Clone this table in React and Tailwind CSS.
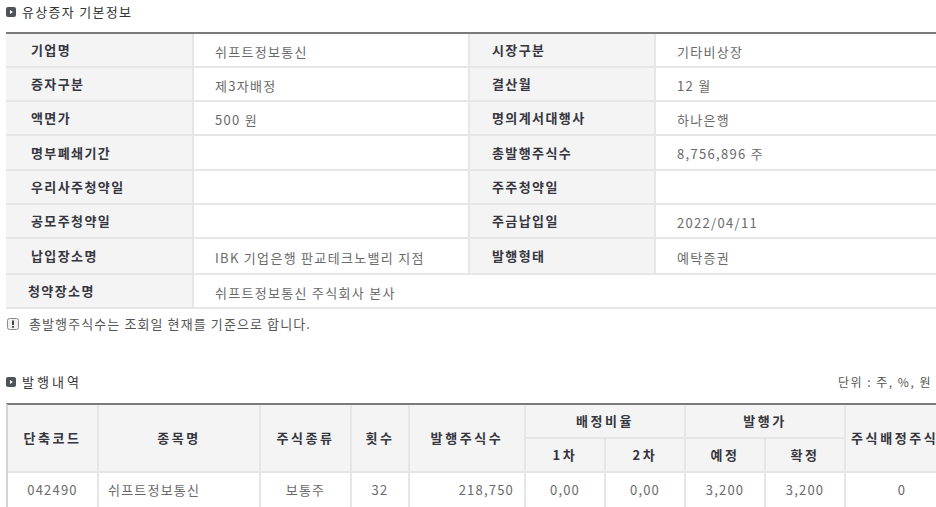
import React from 'react';

const SectionIcon = () => (
  <svg width="10" height="10" viewBox="0 0 10 10" className="shrink-0">
    <rect x="0" y="0" width="10" height="10" rx="2" fill="#4d5359" />
    <polygon points="4,3 7,5 4,7" fill="#ffffff" />
  </svg>
);

const NoteIcon = () => (
  <svg width="12" height="12" viewBox="0 0 12 12" className="shrink-0">
    <rect x="0.5" y="0.5" width="11" height="11" rx="2" fill="#f0f0f0" stroke="#8b8b8b" />
    <rect x="5" y="2.5" width="2" height="4.5" fill="#454545" />
    <rect x="5" y="8" width="2" height="1.7" fill="#454545" />
  </svg>
);

const info = [
  ['기업명', '쉬프트정보통신', '시장구분', '기타비상장'],
  ['증자구분', '제3자배정', '결산월', '12 월'],
  ['액면가', '500 원', '명의계서대행사', '하나은행'],
  ['명부폐쇄기간', '', '총발행주식수', '8,756,896 주'],
  ['우리사주청약일', '', '주주청약일', ''],
  ['공모주청약일', '', '주금납입일', '2022/04/11'],
  ['납입장소명', 'IBK 기업은행 판교테크노밸리 지점', '발행형태', '예탁증권'],
];

const Label = ({ children, className = '' }) => (
  <div className={`bg-[#f4f4f4] flex items-center font-bold text-[13px] tracking-[1.4px] text-[#343640] ${className}`}>
    {children}
  </div>
);

const Value = ({ children, className = '' }) => (
  <div className={`bg-white flex items-center pt-[3px] text-[13px] tracking-[1.3px] text-[#6a6a6a] ${className}`}>
    {children}
  </div>
);

const Head = ({ children, className = '' }) => (
  <div className={`bg-[#f4f4f4] flex items-center justify-center font-bold text-[13px] tracking-[2.6px] text-[#343640] whitespace-nowrap overflow-hidden ${className}`}>
    {children}
  </div>
);

const Cell = ({ children, className = '' }) => (
  <div className={`bg-white flex items-center justify-center text-[13px] tracking-[1.2px] text-[#6a6a6a] ${className}`}>
    {children}
  </div>
);

export default function App() {
  return (
    <div className="w-[936px] h-[507px] overflow-hidden bg-white font-['Noto_Sans_CJK_KR',sans-serif]">
      {/* 유상증자 기본정보 */}
      <div className="pl-[6px]">
        <div className="h-[24px] flex items-center gap-[6px] text-[13px] text-[#333]">
          <SectionIcon />
          <span className="tracking-[1.3px]">유상증자 기본정보</span>
        </div>

        <div className="mt-[8px] w-[930px] border-t-2 border-b-2 border-t-[#7b7b7b] border-b-[#e6e6e6] bg-[#e6e6e6] grid grid-cols-[186px_274px_184px_1fr] grid-rows-[32px_32px_32px_33px_32px_32px_34px_32px] gap-[2px]">
          {info.map((r) => (
            <React.Fragment key={r[0]}>
              <Label className="pl-[25px]">{r[0]}</Label>
              <Value className="pl-[21px]">{r[1]}</Value>
              <Label className="pl-[22px]">{r[2]}</Label>
              <Value className="pl-[21px]">{r[3]}</Value>
            </React.Fragment>
          ))}
          <Label className="pl-[22px]">청약장소명</Label>
          <Value className="pl-[21px] col-span-3">쉬프트정보통신 주식회사 본사</Value>
        </div>

        <div className="mt-[5px] h-[20px] flex items-center gap-[10px] pl-[1px] text-[13px] tracking-[1.1px] text-[#555]">
          <NoteIcon />
          <span>총발행주식수는 조회일 현재를 기준으로 합니다.</span>
        </div>

        {/* 발행내역 */}
        <div className="mt-[36px] h-[24px] w-[926px] flex items-center justify-between">
          <div className="flex items-center gap-[6px] text-[13px] text-[#333]">
            <SectionIcon />
            <span className="tracking-[3px]">발행내역</span>
          </div>
          <span className="text-[12px] tracking-[1.5px] text-[#555]">단위 : 주, %, 원</span>
        </div>

        <div className="mt-[9px] w-[952px] border-t-2 border-l-2 border-t-[#7b7b7b] border-l-[#d4d4d4] bg-[#e6e6e6] grid grid-cols-[89px_160px_89px_56px_114px_78px_78px_78px_78px_112px] grid-rows-[32px_32px_34px] gap-[2px]">
          <Head className="row-span-2">단축코드</Head>
          <Head className="row-span-2">종목명</Head>
          <Head className="row-span-2">주식종류</Head>
          <Head className="row-span-2">횟수</Head>
          <Head className="row-span-2">발행주식수</Head>
          <Head className="col-span-2">배정비율</Head>
          <Head className="col-span-2">발행가</Head>
          <Head className="row-span-2">주식배정주식수</Head>
          <Head>1차</Head>
          <Head>2차</Head>
          <Head>예정</Head>
          <Head>확정</Head>

          <Cell>042490</Cell>
          <Cell className="justify-start pl-[9px]">쉬프트정보통신</Cell>
          <Cell>보통주</Cell>
          <Cell>32</Cell>
          <Cell className="justify-end pr-[10px]">218,750</Cell>
          <Cell>0,00</Cell>
          <Cell>0,00</Cell>
          <Cell>3,200</Cell>
          <Cell>3,200</Cell>
          <Cell>0</Cell>
        </div>
      </div>
    </div>
  );
}
